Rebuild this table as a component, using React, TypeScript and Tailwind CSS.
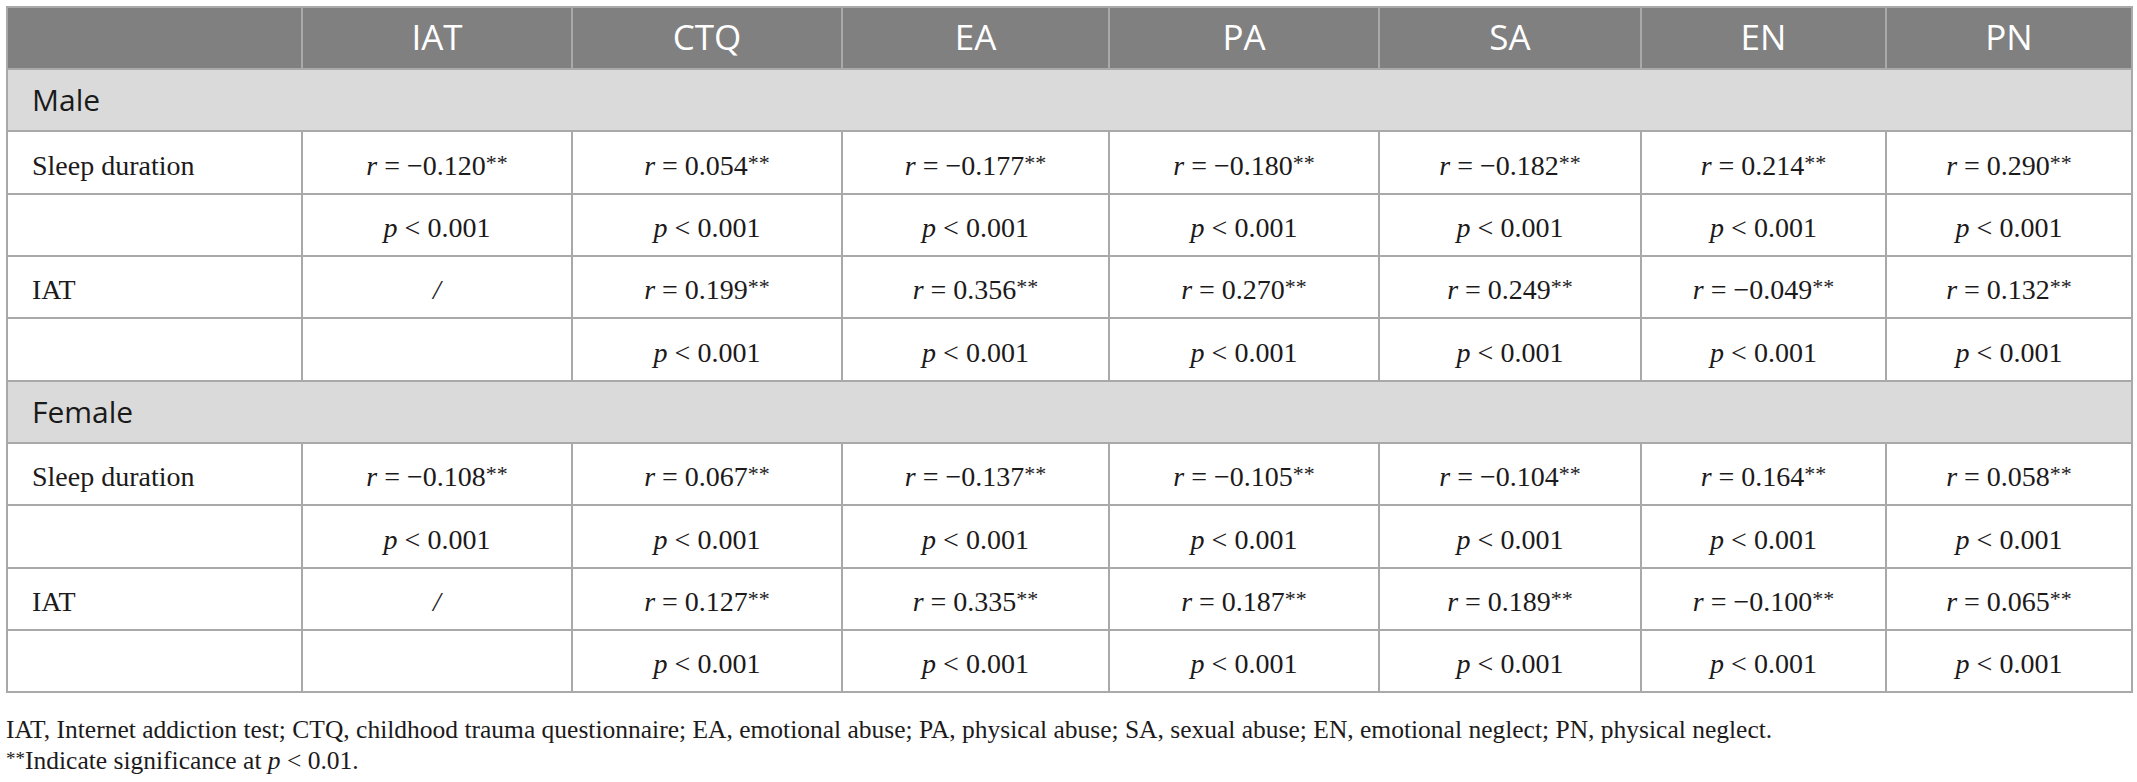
/**
 * Correlation table: sleep duration / IAT vs. CTQ subscales, split by sex
 */

const COLS = ["IAT", "CTQ", "EA", "PA", "SA", "EN", "PN"];

const COL_WIDTHS = [
  "w-[295px]",
  "w-[270px]",
  "w-[270px]",
  "w-[267px]",
  "w-[270px]",
  "w-[262px]",
  "w-[245px]",
  "w-[246px]",
];

type Row =
  | { kind: "group"; label: string; h: string }
  | { kind: "r"; label: string; values: (string | null)[]; h: string }
  | { kind: "p"; values: (string | null)[]; h: string };

const ALL_P = ["0.001", "0.001", "0.001", "0.001", "0.001", "0.001", "0.001"];
const NO_FIRST_P = [null, "0.001", "0.001", "0.001", "0.001", "0.001", "0.001"];

const ROWS: Row[] = [
  { kind: "group", label: "Male", h: "h-[62px]" },
  {
    kind: "r",
    label: "Sleep duration",
    values: ["−0.120", "0.054", "−0.177", "−0.180", "−0.182", "0.214", "0.290"],
    h: "h-[63px]",
  },
  { kind: "p", values: ALL_P, h: "h-[62px]" },
  {
    kind: "r",
    label: "IAT",
    values: [null, "0.199", "0.356", "0.270", "0.249", "−0.049", "0.132"],
    h: "h-[62px]",
  },
  { kind: "p", values: NO_FIRST_P, h: "h-[63px]" },
  { kind: "group", label: "Female", h: "h-[62px]" },
  {
    kind: "r",
    label: "Sleep duration",
    values: ["−0.108", "0.067", "−0.137", "−0.105", "−0.104", "0.164", "0.058"],
    h: "h-[62px]",
  },
  { kind: "p", values: ALL_P, h: "h-[63px]" },
  {
    kind: "r",
    label: "IAT",
    values: [null, "0.127", "0.335", "0.187", "0.189", "−0.100", "0.065"],
    h: "h-[62px]",
  },
  { kind: "p", values: NO_FIRST_P, h: "h-[62px]" },
];

const SANS = "font-['Open_Sans','Noto_Sans',sans-serif]";
const SERIF = "font-['Liberation_Serif','Times_New_Roman',serif]";

function Stars() {
  return <sup className="text-[22px] top-[-5px]">**</sup>;
}

export default function App() {
  return (
    <div className="min-h-screen bg-white pl-[6px] pt-[6px] text-[#1c1a1b]">
      <table className="w-[2125px] table-fixed border-separate border-spacing-0 border-l-2 border-t-2 border-[#a9a9a9]">
        <colgroup>
          {COL_WIDTHS.map((w, i) => (
            <col key={i} className={w} />
          ))}
        </colgroup>
        <thead>
          <tr className="h-[62px]">
            <th className="border-r-2 border-b-2 border-[#a9a9a9] bg-[#808080]" />
            {COLS.map((c) => (
              <th
                key={c}
                className={`border-r-2 border-b-2 border-[#a9a9a9] bg-[#808080] text-center align-middle text-[35px] font-normal leading-none text-white ${SANS}`}
              >
                <span className="relative top-[-2px]">{c}</span>
              </th>
            ))}
          </tr>
        </thead>
        <tbody>
          {ROWS.map((row, i) => {
            if (row.kind === "group") {
              return (
                <tr key={i} className={row.h}>
                  <td
                    colSpan={8}
                    className={`border-r-2 border-b-2 border-[#a9a9a9] bg-[#dadada] pl-[24px] align-middle text-[30px] leading-none text-[#1a1a1a] ${SANS}`}
                  >
                    {row.label}
                  </td>
                </tr>
              );
            }
            return (
              <tr key={i} className={row.h}>
                <td
                  className={`border-r-2 border-b-2 border-[#a9a9a9] pl-[24px] pt-[6px] align-middle text-[28px] leading-none ${SERIF}`}
                >
                  {row.kind === "r" ? row.label : ""}
                </td>
                {row.values.map((v, j) => (
                  <td
                    key={j}
                    className={`border-r-2 border-b-2 border-[#a9a9a9] pt-[6px] text-center align-middle text-[28px] leading-none whitespace-nowrap ${SERIF}`}
                  >
                    {row.kind === "r" ? (
                      v === null ? (
                        <span className="italic">/</span>
                      ) : (
                        <>
                          <span className="italic">r</span> = {v}
                          <Stars />
                        </>
                      )
                    ) : v === null ? (
                      ""
                    ) : (
                      <>
                        <span className="italic">p</span> &lt; {v}
                      </>
                    )}
                  </td>
                ))}
              </tr>
            );
          })}
        </tbody>
      </table>

      <div className={`mt-[21px] text-[25.5px] leading-[31px] ${SERIF}`}>
        <p>
          IAT, Internet addiction test; CTQ, childhood trauma questionnaire; EA, emotional abuse; PA,
          physical abuse; SA, sexual abuse; EN, emotional neglect; PN, physical neglect.
        </p>
        <p>
          <sup className="text-[19px] top-[-4px]">**</sup>Indicate significance at{" "}
          <span className="italic">p</span> &lt; 0.01.
        </p>
      </div>
    </div>
  );
}
